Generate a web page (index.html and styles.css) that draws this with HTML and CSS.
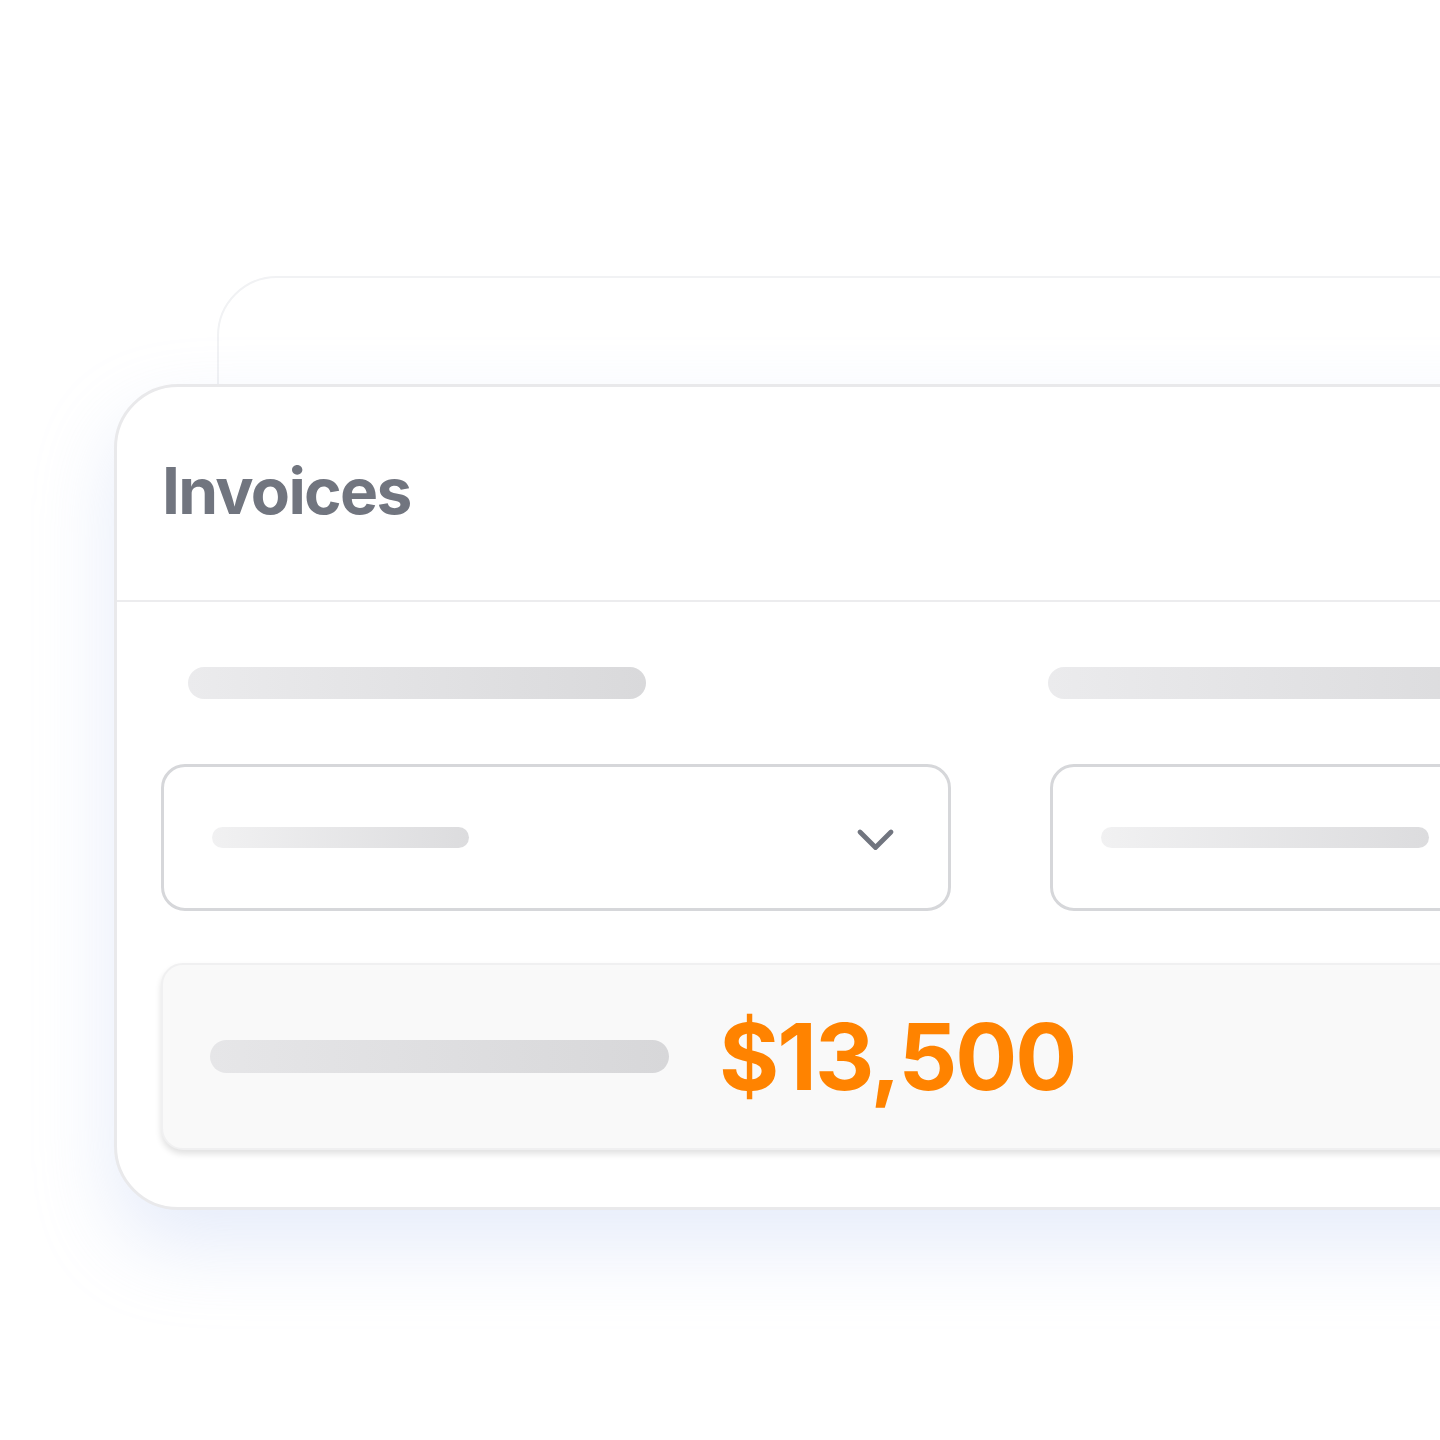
FILE: index.html
```html
<!DOCTYPE html>
<html lang="en">
  <head>
    <meta charset="UTF-8" />
    <title>Invoices</title>
    <link rel="stylesheet" href="styles.css">
  </head>
  <body>
    <div class="stage">
      <div class="stack">
        <div class="card-back"></div>

        <div class="card">
          <div class="card-head">
            <h1>Invoices</h1>
          </div>

          <div class="card-body">
            <div class="fields">
              <div class="field">
                <div class="skel label label-a"></div>
                <div class="select">
                  <div class="skel value value-a"></div>
                  <svg class="chevron" width="44" height="30" viewBox="0 0 44 30">
                    <path d="M6 5 L21.5 20.5 L37 5" fill="none" stroke="#71757f" stroke-width="4.8" stroke-linecap="round" stroke-linejoin="round" />
                  </svg>
                </div>
              </div>
              <div class="field">
                <div class="skel label label-b"></div>
                <div class="select">
                  <div class="skel value value-b"></div>
                </div>
              </div>
            </div>

            <div class="total">
              <div class="skel total-label"></div>
              <span class="amount">$13,500</span>
            </div>
          </div>
        </div>
      </div>
    </div>
  </body>
</html>
```

FILE: styles.css
```css
html,
body {
  margin: 0;
  padding: 0;
  background: #ffffff;
  font-family: "Inter", "Liberation Sans", sans-serif;
}
.stage {
  width: 1440px;
  height: 1440px;
  overflow: hidden;
  padding: 276px 0 0 114px;
  box-sizing: border-box;
}
.stack {
  position: relative;
  padding-top: 108px;
}
.card-back {
  position: absolute;
  top: 0;
  left: 103px;
  width: 1600px;
  height: 300px;
  border: 2px solid #f1f2f4;
  border-radius: 60px;
  background: #ffffff;
}
.card {
  position: relative;
  width: 1780px;
  background: #ffffff;
  border: 3px solid #e9e9eb;
  border-radius: 64px;
  box-shadow: 0 36px 80px rgba(176, 196, 240, 0.32);
}
.card-head {
  height: 213px;
  display: flex;
  align-items: center;
  padding-left: 45px;
  border-bottom: 2px solid #ececee;
}
.card-head h1 {
  margin: 0 0 6px;
  font-size: 64px;
  font-weight: 700;
  line-height: 1;
  color: #71757f;
  letter-spacing: -1.7px;
}
.card-body {
  padding: 65px 0 57px 44px;
}
.fields {
  display: grid;
  grid-template-columns: 790px 790px;
  column-gap: 99px;
}
.field {
  display: flex;
  flex-direction: column;
}
.skel {
  border-radius: 999px;
}
.label {
  height: 32px;
  margin-bottom: 65px;
  background: linear-gradient(90deg, #ebebed, #d9d9db);
}
.label-a {
  width: 458px;
  margin-left: 27px;
}
.label-b {
  width: 500px;
  margin-left: -2px;
}
.select {
  height: 141px;
  border: 3px solid #d6d7da;
  border-radius: 24px;
  display: flex;
  align-items: center;
  justify-content: space-between;
  padding: 0 50px 0 48px;
}
.value {
  height: 21px;
  background: linear-gradient(90deg, #f1f1f2, #dcdcde);
}
.value-a {
  width: 257px;
}
.value-b {
  width: 328px;
}
.chevron {
  display: block;
  margin-top: 8px;
}
.total {
  margin-top: 52px;
  height: 183px;
  background: #f9f9f9;
  border: 2px solid #f0f0f1;
  border-radius: 22px;
  box-shadow: 0 4px 6px rgba(0, 0, 0, 0.12);
  display: flex;
  align-items: center;
  padding-left: 47px;
}
.total-label {
  width: 459px;
  height: 33px;
  background: linear-gradient(90deg, #e6e6e8, #d7d7d9);
}
.amount {
  margin-left: 50px;
  font-size: 92px;
  font-weight: 700;
  line-height: 1;
  color: #ff8300;
  letter-spacing: -2px;
}
```
